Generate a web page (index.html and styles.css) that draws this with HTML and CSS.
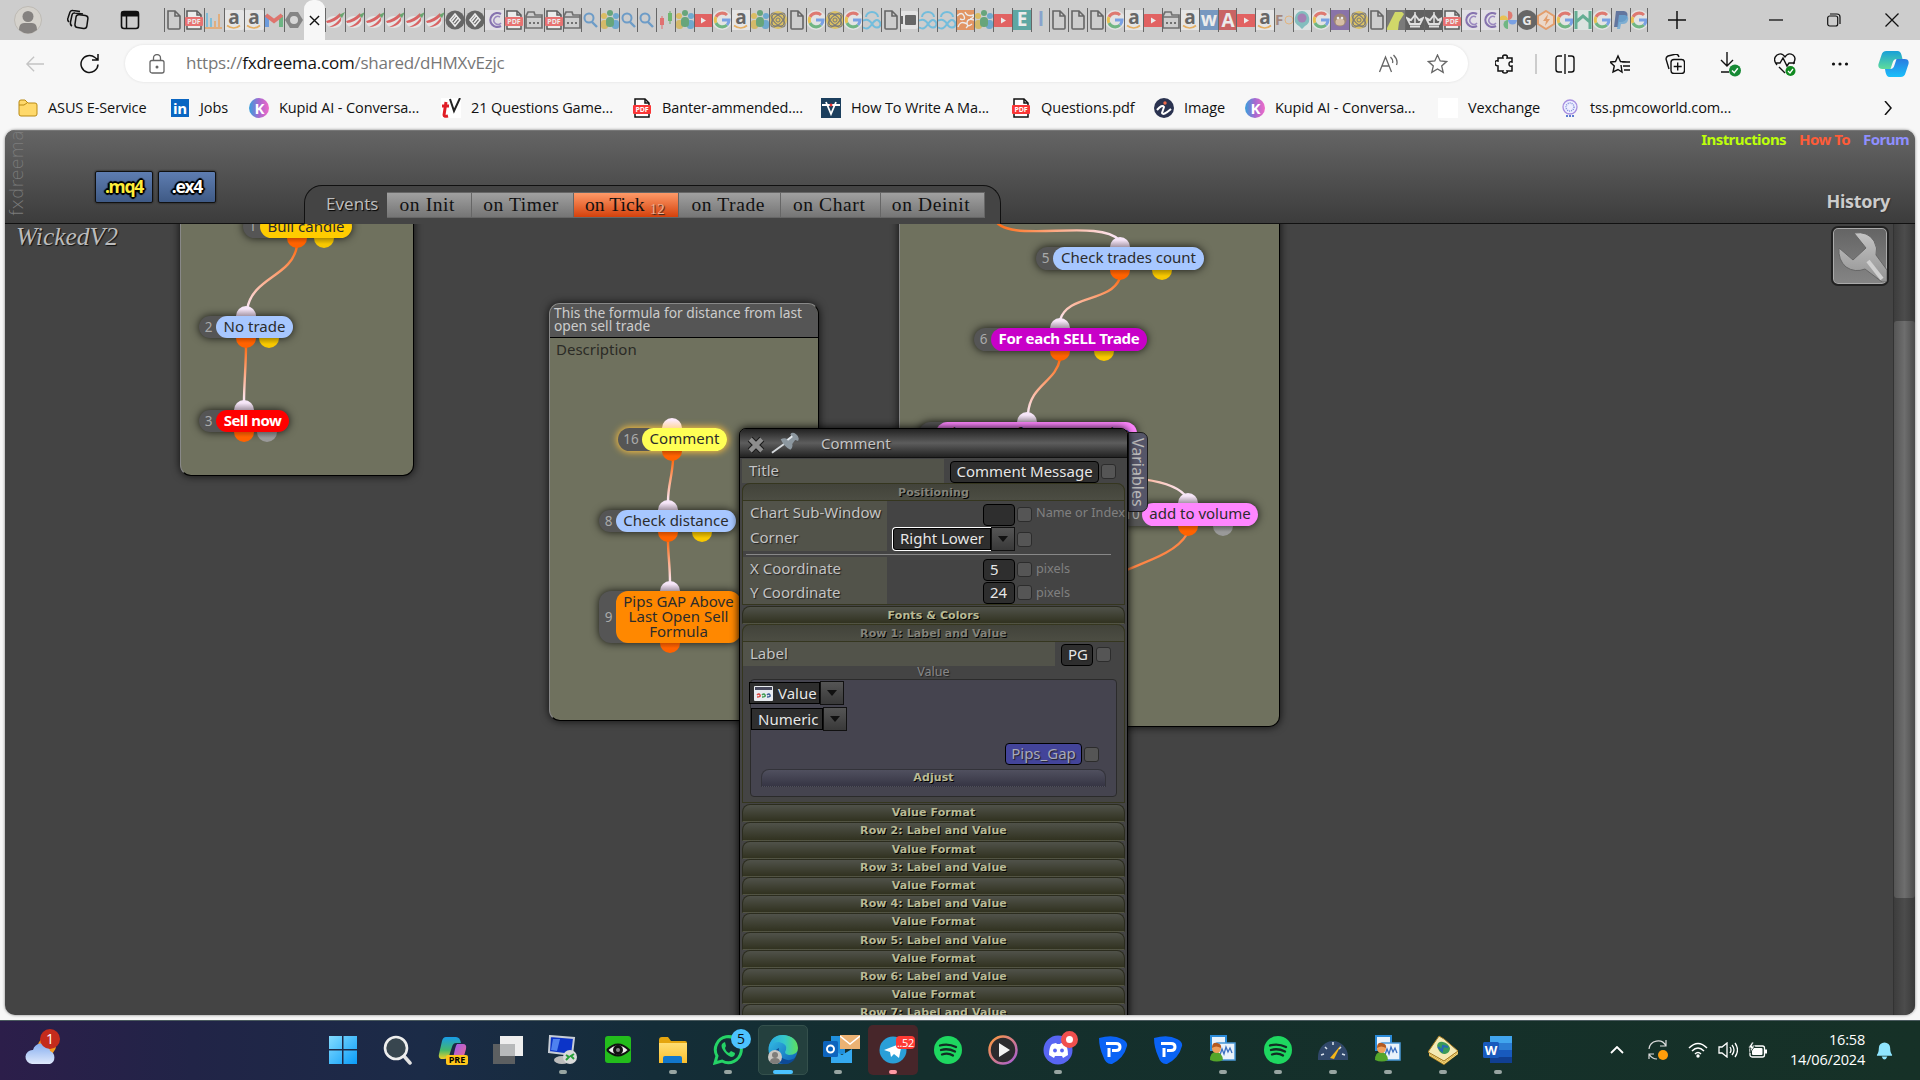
FILE: index.html
```html
<!DOCTYPE html>
<html lang="en">
<head>
    <meta charset="UTF-8">
    <title>fxdreema</title>
    <link rel="stylesheet" href="styles.css">
</head>
<body>
    <!-- Gradients -->
    <svg class="gradients" width="0" height="0">
        <defs>
            <linearGradient id="wire" x1="0" y1="0" x2="0" y2="1"><stop offset="0" stop-color="#ff6a10"/><stop offset="1" stop-color="#fbeafa"/></linearGradient>
            <linearGradient id="wireRight"><stop offset="0" stop-color="#ff6a10"/><stop offset="1" stop-color="#fbeafa"/></linearGradient>
            <linearGradient id="kupid"><stop offset="0" stop-color="#38a0dc"/><stop offset=".5" stop-color="#a569d0"/><stop offset="1" stop-color="#f06ac8"/></linearGradient>
            <linearGradient id="steel" x1="0" y1="0" x2="0" y2="1"><stop offset="0" stop-color="#c4c4c4"/><stop offset="1" stop-color="#929292"/></linearGradient>
            <linearGradient id="edge" x1="0" y1="0" x2="1" y2="1"><stop offset="0" stop-color="#38c6e8"/><stop offset="1" stop-color="#0c5bb5"/></linearGradient>
            <linearGradient id="edgeTop"><stop offset="0" stop-color="#2aa8e4"/><stop offset=".55" stop-color="#36c9c8"/><stop offset="1" stop-color="#5ee05a"/></linearGradient>
            <linearGradient id="cop1" x1="0" y1="0" x2="0" y2="1"><stop offset="0" stop-color="#189ce8"/><stop offset=".6" stop-color="#45b86c"/><stop offset="1" stop-color="#f2d127"/></linearGradient>
            <linearGradient id="cop2" x1="0" y1="0" x2="1" y2="1"><stop offset="0" stop-color="#9a5cf0"/><stop offset="1" stop-color="#f46a8c"/></linearGradient>
            <linearGradient id="cop3" x1="0" y1="0" x2="0" y2="1"><stop offset="0" stop-color="#18a0d8"/><stop offset="1" stop-color="#5fdc9a"/></linearGradient>
            <linearGradient id="cop4" x1="0" y1="0" x2="0" y2="1"><stop offset="0" stop-color="#2b7be0"/><stop offset="1" stop-color="#1ac0fa"/></linearGradient>
            <linearGradient id="media" x1="0" y1="0" x2="1" y2="1"><stop offset="0" stop-color="#ff9a3c"/><stop offset="1" stop-color="#a55cd8"/></linearGradient>
            <linearGradient id="win" x1="0" y1="0" x2="1" y2="1"><stop offset="0" stop-color="#84dcff"/><stop offset="1" stop-color="#0a9cf8"/></linearGradient>
            <linearGradient id="cloud" x1="0" y1="0" x2="0" y2="1"><stop offset="0" stop-color="#86aef0"/><stop offset="1" stop-color="#dfe9fb"/></linearGradient>
            <linearGradient id="fold" x1="0" y1="0" x2="0" y2="1"><stop offset="0" stop-color="#ffde74"/><stop offset="1" stop-color="#fbbf2c"/></linearGradient>
        </defs>
    </svg>

    <!-- Icon sprite -->
    <svg class="sprite">
        <symbol id="f-doc" viewBox="0 0 20 20"><path d="M4 1h7l5 5v12q0 1-1 1H5q-1 0-1-1zM11 1v5h5" fill="none" stroke="#222" stroke-width="1.6"/></symbol>
        <symbol id="f-pdf" viewBox="0 0 20 20"><path d="M3 1h10l4 4v14H3z" fill="#fff" stroke="#111" stroke-width="1.5"/><path d="M13 1v4h4" fill="none" stroke="#111" stroke-width="1.5"/><rect x="1" y="7" width="18" height="9" rx="1" fill="#fa3636"/><text x="10" y="14.2" class="t t6">PDF</text></symbol>
        <symbol id="f-bars" viewBox="0 0 20 20"><path d="M3 18V3M7 18V8" stroke="#4db3e0" stroke-width="2"/><path d="M11 18V11M15 18V4M1 18h17" stroke="#ef9a4a" stroke-width="2"/></symbol>
        <symbol id="f-amazon" viewBox="0 0 20 20"><rect width="20" height="20" rx="2" fill="#f6f6f6"/><text x="10" y="14" class="t t18 dark">a</text><path d="M3 15.500q7 5 13 0" fill="none" stroke="#f59a1c" stroke-width="1.700"/></symbol>
        <symbol id="f-gmail" viewBox="0 0 20 20"><path d="M3 17V5" stroke="#2f7de8" stroke-width="4"/><path d="M17 17V5" stroke="#2ea553" stroke-width="4"/><path d="M2 5l8 6 8-6" fill="none" stroke="#ea3a2f" stroke-width="4"/></symbol>
        <symbol id="f-hex" viewBox="0 0 20 20"><path d="M6 2h8l5 8-5 8H6l-5-8z" fill="#555"/><circle cx="10" cy="10" r="4" fill="#ddd"/></symbol>
        <symbol id="f-fx" viewBox="0 0 20 20"><ellipse cx="9" cy="12" rx="8" ry="6" fill="#f6f6f6"/><path d="M1 11Q9 9 15 3l1 3Q9 13 2 13z" fill="#e02020"/><path d="M4 17Q12 14 16 7v4q-4 6-12 6" fill="#e02020"/><path d="M14 5l6-3-3 6z" fill="#2a8a30"/></symbol>
        <symbol id="f-diamond" viewBox="0 0 20 20"><circle cx="10" cy="10" r="9.500" fill="#222"/><path d="M5 10l5-6 5 6-5 6zM7 11l4-5M9 13l4-5" fill="none" stroke="#fff" stroke-width="1.600"/></symbol>
        <symbol id="f-c" viewBox="0 0 20 20"><rect width="20" height="20" fill="#f1eef6"/><path d="M16 4A7 7 0 1 0 16 16" fill="none" stroke="#58389c" stroke-width="2.200"/><path d="M15 7a4 4 0 1 0 1 6" fill="none" stroke="#7b5cb8" stroke-width="1.500"/></symbol>
        <symbol id="f-cal" viewBox="0 0 20 20"><path d="M2 6l2-4h6l1 3h7v13H2zM2 7h16" fill="none" stroke="#333" stroke-width="1.700"/><path d="M5 13h2M9 13h2M13 13h2" stroke="#333" stroke-width="2"/></symbol>
        <symbol id="f-search" viewBox="0 0 20 20"><circle cx="8" cy="8" r="4.500" fill="none" stroke="#2f7cc4" stroke-width="2"/><path d="M11 12l5 5" stroke="#2f7cc4" stroke-width="2.400"/></symbol>
        <symbol id="f-people" viewBox="0 0 20 20"><circle cx="4" cy="6" r="3" fill="#e5b31d"/><rect x="1" y="10" width="7" height="9" rx="3" fill="#d7ad28"/><circle cx="16" cy="6" r="3" fill="#3292d0"/><rect x="12" y="10" width="7" height="9" rx="3" fill="#3292d0"/><circle cx="10" cy="3" r="3" fill="#258c45"/><rect x="6" y="7" width="8" height="10" rx="3.500" fill="#258c45"/></symbol>
        <symbol id="f-candle" viewBox="0 0 20 20"><path d="M6 6v13" stroke="#e33" stroke-width="1"/><rect x="4" y="8" width="4" height="7" fill="#e33"/><path d="M14 1v13" stroke="#292" stroke-width="1"/><rect x="12" y="3" width="4" height="8" fill="#3a3"/></symbol>
        <symbol id="f-yt" viewBox="0 0 20 20"><rect y="4" width="20" height="13" rx="2" fill="#ef1c1c"/><path d="M8 7.500v6l5-3z" fill="#fff"/></symbol>
        <symbol id="f-g" viewBox="0 0 20 20"><circle cx="10" cy="10" r="10" fill="#f3f3f3"/><g fill="none" stroke-width="3"><path d="M15 5A7 7 0 0 0 4 7" stroke="#ea4335"/><path d="M4 7a7 7 0 0 0 0 6" stroke="#fbbc05"/><path d="M4 13a7 7 0 0 0 11 2" stroke="#34a853"/><path d="M10 10h7q0 3-2 5" stroke="#4285f4"/></g></symbol>
        <symbol id="f-atom" viewBox="0 0 20 20"><circle cx="10" cy="10" r="9" fill="#e5ba20"/><g fill="none" stroke="#444" stroke-width="1"><ellipse cx="10" cy="10" rx="9" ry="4" transform="rotate(45 10 10)"/><ellipse cx="10" cy="10" rx="9" ry="4" transform="rotate(-45 10 10)"/><rect x="4" y="4" width="12" height="12" rx="3"/><circle cx="10" cy="10" r="2"/></g></symbol>
        <symbol id="f-cloud" viewBox="0 0 20 20"><g fill="none" stroke="#38b3e6" stroke-width="2"><path d="M4 7a6 5 0 0 1 12 0"/><path d="M3 18a4 4 0 0 1 0-8q4-1 7 4t7 3q3-3 0-6t-7 3-7 4"/></g></symbol>
        <symbol id="f-card" viewBox="0 0 20 20"><rect y="1" width="20" height="18" rx="4" fill="#f3f3f3"/><path d="M3 6v8" stroke="#222" stroke-width="2"/><rect x="6" y="5" width="11" height="10" rx="1" fill="#222"/></symbol>
        <symbol id="f-swirl" viewBox="0 0 20 20"><rect width="20" height="20" fill="#f0701e"/><path d="M1 6q5-5 7 0t-4 3M9 2q2 5 8 3M2 17q2-6 7-4t1 5M18 10q-7-2-7 3t5 1M14 9q4-1 4-5" fill="none" stroke="#fff" stroke-width="1.400"/></symbol>
        <symbol id="f-e" viewBox="0 0 20 20"><rect width="20" height="20" fill="#158e88"/><text x="10" y="16" class="t t18">E</text></symbol>
        <symbol id="f-l" viewBox="0 0 20 20"><text x="11" y="16" class="t t18 blue-letter">l</text></symbol>
        <symbol id="f-w" viewBox="0 0 20 20"><rect width="20" height="20" fill="#3f76b8"/><text x="10" y="16" class="t t18">w</text></symbol>
        <symbol id="f-a" viewBox="0 0 20 20"><rect width="20" height="20" fill="#c81f1f"/><text x="10" y="17" class="t t18">A</text></symbol>
        <symbol id="f-f" viewBox="0 0 20 20"><text x="5" y="15" class="t t14 brown">F</text><circle cx="15" cy="10" r="4" fill="none" stroke="#f1a54c"/></symbol>
        <symbol id="f-chat" viewBox="0 0 20 20"><rect width="20" height="20" fill="#e8f1f2"/><path d="M10 1a8 8 0 0 1 3 15l-3 3-3-3A8 8 0 0 1 10 1" fill="#52b3b5"/><circle cx="10" cy="8" r="4.500" fill="#8b4fa4"/></symbol>
        <symbol id="f-monkey" viewBox="0 0 20 20"><rect width="20" height="20" fill="#5d3891"/><circle cx="10" cy="10" r="6.500" fill="#80583c"/><ellipse cx="10" cy="12" rx="4.500" ry="3.500" fill="#ddb58c"/><circle cx="8" cy="8" r="1.300" fill="#fff"/><circle cx="12" cy="8" r="1.300" fill="#fff"/></symbol>
        <symbol id="f-green" viewBox="0 0 20 20"><rect width="20" height="20" fill="#444"/><path d="M0 20L9 2h7l2 2-5 8-1 8z" fill="#d3df28"/></symbol>
        <symbol id="f-crown" viewBox="0 0 20 20"><rect width="20" height="20" fill="#1b1b1b"/><path d="M2 8l3 6h10l3-6-4 2-4-5-4 5zM5 16.500h10" fill="none" stroke="#eee" stroke-width="1.800"/><path d="M10 2v12" stroke="#eee" stroke-width="1.500"/></symbol>
        <symbol id="f-photos" viewBox="0 0 20 20"><path d="M10 1a4 4 0 0 1 0 9z" fill="#ea4335"/><path d="M19 10a4 4 0 0 1-9 0z" fill="#4285f4"/><path d="M10 19a4 4 0 0 1 0-9z" fill="#34a853"/><path d="M1 10a4 4 0 0 1 9 0z" fill="#fbbc05"/></symbol>
        <symbol id="f-gd" viewBox="0 0 20 20"><circle cx="10" cy="10" r="10" fill="#222"/><text x="10" y="14.500" class="t t12">G</text></symbol>
        <symbol id="f-bolt" viewBox="0 0 20 20"><path d="M10 1l8 5v8l-8 5-8-5V6z" fill="#ffe0c8" stroke="#f27f2c" stroke-width="2"/><path d="M12 4L7 11h3l-1 5 5-7h-3z" fill="#f27f2c"/></symbol>
        <symbol id="f-home" viewBox="0 0 20 20"><rect width="20" height="20" fill="#e7f3ee"/><path d="M3 1v18M17 1v18M3 12l7-6 7 6" fill="none" stroke="#1f9b6e" stroke-width="3"/></symbol>
        <symbol id="f-paypal" viewBox="0 0 20 20"><path d="M5 1h8q5 1 3 7-2 4-6 4H8l-1 5H3z" fill="#1e3d80"/><path d="M8 5h6q4 1 3 5-1 4-5 4h-2l-1 5H6z" fill="#2b8fd8" opacity=".8"/></symbol>

        <symbol id="b-kupid" viewBox="0 0 20 20"><circle cx="10" cy="10" r="10" fill="url(#kupid)"/><text x="10.500" y="15.500" class="t t14">K</text></symbol>

        <symbol id="k-spotify" viewBox="0 0 30 30"><circle cx="15" cy="15" r="14" fill="#1ed760"/><path d="M7 10.500q8-2.500 16 1.500M8 15q7-2 14 1.500M9 19.500q6-2 11 1" fill="none" stroke="#122c24" stroke-width="2.300" stroke-linecap="round"/></symbol>
        <symbol id="k-p" viewBox="0 0 30 30"><path d="M1 3Q15-1 24 4q6 3 5 7-3 12-15 18Q8 30 5 21 1 12 1 3" fill="#0a63f5"/><path d="M11 22V13M8 8.500h10q4 0 4 3.500t-4 3.500h-4" fill="none" stroke="#fff" stroke-width="3"/></symbol>
        <symbol id="k-trader" viewBox="0 0 30 30"><rect x="3" y="1" width="15" height="14" fill="#e8f2fb" stroke="#2b8bd8" stroke-width="2"/><rect x="9" y="8" width="18" height="17" fill="#eaf2fa" stroke="#4a98d8" stroke-width="1.500"/><path d="M12 20l2-6 2 5 2-7 2 5 2-4 2 5" fill="none" stroke="#3b6fc0" stroke-width="1.300"/><path d="M2 25q0-8 6-8t7 8q-6 3-13 0" fill="#54a52a"/><circle cx="8.500" cy="13.500" r="4.500" fill="#f0a05c"/><path d="M4 13q0-6 5-5 5 1 4 5-5-3-9 0" fill="#b45a20"/></symbol>
    </svg>

    <!-- Tab strip -->
    <div class="tabstrip">
        <svg class="avatar" viewBox="0 0 28 28"><circle cx="14" cy="14" r="13.500" fill="#d5d2cc" stroke="#bdbab4"/><circle cx="14" cy="10.500" r="5.500" fill="#858280"/><path d="M5 24q0-7 5-7h8q5 0 5 7-9 7-18 0" fill="#858280"/></svg>
        <svg class="workspaces" viewBox="0 0 22 22"><g fill="none" stroke="#111" stroke-width="1.500"><rect x="8.500" y="6" width="12" height="13" rx="3" transform="rotate(8 14 12)"/><path d="M5 17q-2-1-1.500-4L5 6q.5-2.500 3-2l8 1"/><path d="M2 13q-2-2-1-4l2-6q1-2 3-1.500l7 1"/></g></svg>
        <svg class="vtabs" viewBox="0 0 20 20"><rect x="1.500" y="1.500" width="17" height="17" rx="2.500" fill="none" stroke="#111" stroke-width="1.600"/><path d="M1.500 2h17v4h-17z" fill="#111" stroke="#111"/><path d="M6.500 6v12" stroke="#111" stroke-width="1.500"/></svg>
        <div class="tabs" id="tabs"></div>
        <svg class="newtab" viewBox="0 0 18 18"><path d="M9 0v18M0 9h18" stroke="#111" stroke-width="1.500"/></svg>
        <div class="window-buttons">
            <svg viewBox="0 0 14 14"><path d="M0 7h14" stroke="#111" stroke-width="1.300"/></svg>
            <svg viewBox="0 0 14 14"><path d="M3 1h7q3 0 3 3v7" fill="none" stroke="#111" stroke-width="1.200"/><rect x=".7" y="3" width="10" height="10" rx="2" fill="none" stroke="#111" stroke-width="1.200"/></svg>
            <svg viewBox="0 0 14 14"><path d="M.5.5l13 13M13.500.5l-13 13" stroke="#111" stroke-width="1.300"/></svg>
        </div>
    </div>

    <!-- Toolbar -->
    <div class="toolbar">
        <svg class="back" viewBox="0 0 20 20"><path d="M20 10H1M9 2L1 10l8 8" fill="none" stroke="#c4c4c4" stroke-width="1.500"/></svg>
        <svg class="reload" viewBox="0 0 20 20"><path d="M18.500 10.500a8.500 8.500 0 1 1-3-7l2.500 2M18.500 0v6h-6" fill="none" stroke="#111" stroke-width="1.500"/></svg>
        <div class="address">
            <svg class="lock" viewBox="0 0 16 20"><rect x="1" y="6.500" width="14" height="12.500" rx="2" fill="none" stroke="#666" stroke-width="1.300"/><path d="M4.500 6V4a3.500 3.500 0 0 1 7 0v2" fill="none" stroke="#666" stroke-width="1.300"/><circle cx="8" cy="13" r="1.500" fill="#666"/></svg>
            <span class="url">https://<b>fxdreema.com</b>/shared/dHMXvEzjc</span>
            <svg class="read" viewBox="0 0 20 20"><path d="M1 18L7 3l6 15M3.500 12h7M12 3q3 3 2 6M15 1q5 5 3 10" fill="none" stroke="#666" stroke-width="1.300"/></svg>
            <svg class="star" viewBox="0 0 20 20"><path d="M10 1l2.700 6 6.300.6-4.800 4.300 1.500 6.500-5.700-3.500-5.700 3.500 1.500-6.500L1 7.600 7.300 7z" fill="none" stroke="#666" stroke-width="1.300"/></svg>
        </div>
        <div class="tools">
            <svg viewBox="0 0 20 20"><path d="M5 4h3q-1-3 2-3t2 3h5v4q-3-1-3 2t3 2v5h-5q1 2-2 2t-2-2H3v-5q-3 0-3-3t3-2V4z" fill="none" stroke="#111" stroke-width="1.500"/></svg>
            <i class="divider"></i>
            <svg viewBox="0 0 20 20"><path d="M7 2H3.500Q1 2 1 4.500v11Q1 18 3.500 18H7M13 2h3.500Q19 2 19 4.500v11q0 2.500-2.500 2.500H13M10 0v20" fill="none" stroke="#111" stroke-width="1.400"/></svg>
            <svg viewBox="0 0 20 20"><path d="M11 11l1 7-4-2.500L3 18l1.300-6L0 8l5.500-.5L8 2l2.500 5.500L17 8M13 12h7M12 8h8M14 16h6" fill="none" stroke="#111" stroke-width="1.400"/></svg>
            <svg viewBox="0 0 20 20"><rect x="6" y="5.500" width="13.500" height="14" rx="3" fill="none" stroke="#111" stroke-width="1.400"/><path d="M12.700 8.500v8M8.700 12.500h8M4 15L1 5q0-2 2-3l8-2q2 0 3 3" fill="none" stroke="#111" stroke-width="1.400"/></svg>
            <svg class="badged" viewBox="0 0 22 25"><path d="M8 0v14M2 8l6 6 6-6M2 20h8" fill="none" stroke="#111" stroke-width="1.400"/><circle cx="16" cy="18.500" r="6" fill="#168a35"/><path d="M13 18.500l2.300 2.300 3.500-4.500" fill="none" stroke="#fff" stroke-width="1.400"/></svg>
            <svg class="badged" viewBox="0 0 22 25"><path d="M3 13Q-2 7 3 3q5-3 8 2 3-5 8-2 4 3 0 9M1 11h5l3-5 4 8 2-3h6M5 15l6 6" fill="none" stroke="#111" stroke-width="1.400"/><circle cx="16.500" cy="19" r="5" fill="#108a20"/><path d="M14 19l2 2 3-4" fill="none" stroke="#fff" stroke-width="1.300"/></svg>
            <svg viewBox="0 0 20 20"><g fill="#111"><circle cx="3.500" cy="10" r="1.600"/><circle cx="10" cy="10" r="1.600"/><circle cx="16.500" cy="10" r="1.600"/></g></svg>
            <svg class="copilot" viewBox="0 0 30 28"><path d="M8 1h11q3 0 4 4l1 4h-6q-3 0-4 4l-2 6H4q-5 0-4-5l3-9q1-4 5-4" fill="url(#cop3)"/><path d="M22 27H11q-3 0-4-5l-.5-3H12q3 0 4-4l2-6h8q5 0 4 5l-3 9q-1 4-5 4" fill="url(#cop4)"/></svg>
        </div>
    </div>

    <!-- Bookmarks -->
    <div class="bookmarks">
        <div class="bookmark"><svg viewBox="0 0 20 20"><path d="M1 4q0-2 2-2h4l3 3h7q2 0 2 2v9q0 2-2 2H3q-2 0-2-2z" fill="#ffd96b" stroke="#b98a14"/><path d="M1 7h5l3-2" fill="none" stroke="#b98a14"/></svg>ASUS E-Service</div>
        <div class="bookmark"><svg viewBox="0 0 20 20"><rect x="1" y="1" width="18" height="18" fill="#0a66c2"/><text x="10" y="16" class="t t14">in</text></svg>Jobs</div>
        <div class="bookmark"><svg><use href="#b-kupid"/></svg>Kupid AI - Conversa...</div>
        <div class="bookmark"><svg viewBox="0 0 20 20"><rect width="20" height="20" fill="#fff"/><path d="M1 8h7M5 4L3 17q0 2 4 1" fill="none" stroke="#e01e26" stroke-width="3"/><path d="M9 1l4 12 6-13" fill="none" stroke="#222" stroke-width="2"/></svg>21 Questions Game...</div>
        <div class="bookmark"><svg><use href="#f-pdf"/></svg>Banter-ammended....</div>
        <div class="bookmark"><svg viewBox="0 0 20 20"><rect width="20" height="20" fill="#1c3f5e"/><path d="M5 4l5 12 5-12M1 7h18" fill="none" stroke="#fff" stroke-width="1.800"/><circle cx="10" cy="7" r="1.500" fill="#e33"/></svg>How To Write A Ma...</div>
        <div class="bookmark"><svg><use href="#f-pdf"/></svg>Questions.pdf</div>
        <div class="bookmark"><svg viewBox="0 0 20 20"><circle cx="10" cy="10" r="10" fill="#2b3350"/><circle cx="11" cy="5" r="1.700" fill="#ef6a4a"/><path d="M3 12q5-6 7-3l-2 6q1 3 9-4" fill="none" stroke="#fff" stroke-width="2"/></svg>Image</div>
        <div class="bookmark"><svg><use href="#b-kupid"/></svg>Kupid AI - Conversa...</div>
        <div class="bookmark"><svg viewBox="0 0 20 20"><rect width="20" height="20" fill="#fff"/></svg>Vexchange</div>
        <div class="bookmark"><svg viewBox="0 0 20 20"><circle cx="10" cy="9" r="7" fill="#eef" stroke="#a78fe0" stroke-width="1.300"/><circle cx="10" cy="9" r="4" fill="none" stroke="#7f8fd8" stroke-width="1.500" stroke-dasharray="1 1"/><path d="M6 18h8" stroke="#5c7ad0" stroke-width="2" stroke-dasharray="2 1"/></svg>tss.pmcoworld.com...</div>
        <svg class="more" viewBox="0 0 8 14"><path d="M1 0l6 7-6 7" fill="none" stroke="#111" stroke-width="1.500"/></svg>
    </div>

    <!-- Page -->
    <div class="page">
        <div class="header">
            <div class="logo">fxdreema</div>
            <div class="exports">
                <span class="export mq4">.mq4</span>
                <span class="export">.ex4</span>
            </div>
            <div class="events">
                <span class="events-label">Events</span>
                <span class="event">on Init</span>
                <span class="event">on Timer</span>
                <span class="event active">on Tick <sub>12</sub></span>
                <span class="event">on Trade</span>
                <span class="event">on Chart</span>
                <span class="event">on Deinit</span>
            </div>
            <div class="header-right">
                <div class="links"><a class="link-instructions">Instructions</a><a class="link-howto">How To</a><a class="link-forum">Forum</a></div>
                <div class="history">History</div>
            </div>
        </div>

        <div class="canvas">
            <div class="project">WickedV2</div>
            <div class="diagram">
                <div class="group" id="group1"></div>
                <div class="group" id="group2">
                    <div class="group-title">This the formula for distance from last open sell trade</div>
                    <div class="group-text">Description</div>
                </div>
                <div class="group" id="group3"></div>

                <svg class="wires" width="1920" height="1080" fill="none" stroke="url(#wire)" stroke-width="2.400">
                    <path d="M297 246C292 277 252 277 247 310"/>
                    <path d="M246 346C246 365 244 385 244 402"/>
                    <path d="M673 460C672 478 668 485 668 502"/>
                    <path d="M668 540C668 555 670 565 670 583"/>
                    <path d="M994 218C1004 246 1098 217 1119 240" stroke="url(#wireRight)"/>
                    <path d="M1120 278C1110 303 1068 294 1060 320"/>
                    <path d="M1060 359C1056 382 1030 385 1028 414"/>
                    <path d="M1080 478C1120 475 1175 478 1187 498" stroke="url(#wireRight)"/>
                    <path d="M1187 534C1175 555 1140 563 1110 577" stroke="#ff8646"/>
                </svg>

                <div class="node yellow" id="node1"><span class="num">1</span><span class="name">Bull candle</span><i class="port out"></i><i class="port alt"></i></div>
                <div class="node blue" id="node2"><i class="port in"></i><span class="num">2</span><span class="name">No trade</span><i class="port out"></i><i class="port alt"></i></div>
                <div class="node red" id="node3"><i class="port in"></i><span class="num">3</span><span class="name">Sell now</span><i class="port out"></i><i class="port alt off"></i></div>
                <div class="node lemon" id="node16"><i class="port in"></i><span class="num">16</span><span class="name">Comment</span><i class="port out"></i></div>
                <div class="node blue" id="node8"><i class="port in"></i><span class="num">8</span><span class="name">Check distance</span><i class="port out"></i><i class="port alt"></i></div>
                <div class="node orange" id="node9"><i class="port in"></i><span class="num">9</span><span class="name">Pips GAP Above<br>Last Open Sell<br>Formula</span><i class="port out"></i></div>
                <div class="node blue" id="node5"><i class="port in"></i><span class="num">5</span><span class="name">Check trades count</span><i class="port out"></i><i class="port alt"></i></div>
                <div class="node magenta" id="node6"><i class="port in"></i><span class="num">6</span><span class="name">For each SELL Trade</span><i class="port out"></i><i class="port alt"></i></div>
                <div class="node pink" id="node7"><i class="port in"></i><span class="num">7</span><span class="name">Pips away from open price</span></div>
                <div class="node pink" id="node10"><i class="port in"></i><span class="num">10</span><span class="name">add to volume</span><i class="port out"></i><i class="port alt off"></i></div>

                <!-- Block settings window -->
                <div class="variables">Variables</div>
                <div class="window">
                    <div class="window-title">
                        <svg class="close" viewBox="0 0 20 20"><path d="M3.500 3.500l13 13M16.500 3.500l-13 13" stroke="#1c1c1c" stroke-width="7.500"/><path d="M3.500 3.500l13 13M16.500 3.500l-13 13" stroke="#8e8e8e" stroke-width="5"/></svg>
                        <svg class="pin" viewBox="0 0 30 22"><path d="M1 21l14-10" stroke="#d6dade" stroke-width="2"/><path d="M10 7q4-2 7 0l4-3-1-2q2-3 6 0t2 7l-3-1-3 4q1 4-2 6-7-4-10-11" fill="#8c979f"/><path d="M17 8l5-4" stroke="#e4e9ee" stroke-width="2"/></svg>
                        <span>Comment</span>
                    </div>

                    <div class="row title-row">
                        <span class="label">Title</span>
                        <span class="input">Comment Message</span><i class="check"></i>
                    </div>

                    <div class="section">
                        <div class="section-head open">Positioning</div>
                        <div class="fields">
                            <div class="row short"><span class="label">Chart Sub-Window</span><span class="input small"></span><i class="check"></i><span class="hint">Name or Index</span></div>
                            <div class="row short"><span class="label">Corner</span><span class="select focus">Right Lower</span><i class="arrow"></i><i class="check"></i></div>
                            <div class="rule"></div>
                            <div class="row short coord"><span class="label">X Coordinate</span><span class="input small">5</span><i class="check"></i><span class="hint">pixels</span></div>
                            <div class="row short coord"><span class="label">Y Coordinate</span><span class="input small">24</span><i class="check"></i><span class="hint">pixels</span></div>
                        </div>
                    </div>

                    <div class="section-head fonts">Fonts &amp; Colors</div>

                    <div class="section">
                        <div class="section-head open">Row 1: Label and Value</div>
                        <div class="row label-row"><span class="label">Label</span><span class="input small">PG</span><i class="check"></i></div>
                        <div class="value-caption">Value</div>
                        <div class="value-box">
                            <div class="picker">
                                <span class="select"><svg viewBox="0 0 19 15"><rect width="19" height="15" rx="1" fill="#e9ecf0"/><rect x="1" y="1" width="17" height="3" fill="#47485c"/><path d="M3 9q2-2 3 0t-3 2" stroke="#d8453c" stroke-width="1.500" fill="none"/><path d="M8 9q2-2 3 0t-3 2" stroke="#3e9a50" stroke-width="1.500" fill="none"/><path d="M13 9q2-2 3 0t-3 2" stroke="#3a5c94" stroke-width="1.500" fill="none"/></svg>Value</span><i class="arrow"></i>
                            </div>
                            <div class="picker numeric"><span class="select">Numeric</span><i class="arrow"></i></div>
                            <div class="value-row"><span class="input variable">Pips_Gap</span><i class="check"></i></div>
                            <div class="section-head adjust">Adjust</div>
                        </div>
                    </div>

                    <div class="section-head">Value Format</div>
                    <div class="section-head">Row 2: Label and Value</div>
                    <div class="section-head">Value Format</div>
                    <div class="section-head">Row 3: Label and Value</div>
                    <div class="section-head">Value Format</div>
                    <div class="section-head">Row 4: Label and Value</div>
                    <div class="section-head">Value Format</div>
                    <div class="section-head">Row 5: Label and Value</div>
                    <div class="section-head">Value Format</div>
                    <div class="section-head">Row 6: Label and Value</div>
                    <div class="section-head">Value Format</div>
                    <div class="section-head">Row 7: Label and Value</div>
                </div>
            </div>

            <div class="wrench">
                <svg viewBox="0 0 54 54"><path d="M21 5q14-2 20 8 4 7 2 14l11 15v12h-5L32 41q-10 4-19-2Q5 32 6 20l14 12 13-12z" fill="url(#steel)" stroke="#666"/><path d="M35 33l14 18" stroke="#d0d0d0" stroke-width="4"/></svg>
            </div>
            <div class="scrollbar"><div class="thumb"></div></div>
        </div>
    </div>

    <!-- Taskbar -->
    <div class="taskbar">
        <div class="weather">
            <svg viewBox="0 0 32 32"><circle cx="22" cy="12" r="9" fill="#f59a1c"/><path d="M7 30a7 7 0 0 1 1-14 9 9 0 0 1 16-3l1 4a7 7 0 0 1 0 13z" fill="url(#cloud)"/></svg>
            <span class="badge red-badge">1</span>
        </div>
        <div class="apps">
            <div class="app"><svg viewBox="0 0 30 30"><path d="M1 1h13v13H1zM15.500 1H29v13H15.500zM1 15.500h13V29H1zM15.500 15.500H29V29H15.500z" fill="url(#win)"/></svg></div>
            <div class="app"><svg viewBox="0 0 30 30"><path d="M20 20l7 8" stroke="#e2e2e2" stroke-width="3.500" stroke-linecap="round"/><circle cx="13" cy="13" r="11" fill="#38464f" stroke="#eee" stroke-width="2.600"/></svg></div>
            <div class="app"><svg viewBox="0 0 30 30"><path d="M8 2h10q4 0 5 6h-5q-3 0-4 4l-3 9q-1 3-5 3H3q-3-1-2-5l3-13q1-4 4-4" fill="url(#cop1)"/><path d="M19 9h6q4 0 3 5l-2 7q-1 4-5 4h-5q-1-5 1-11 1-4 2-5" fill="url(#cop2)"/><rect x="8" y="20" width="22" height="10" rx="2" fill="#ffc61a"/><text x="19" y="28.200" class="t t9 black">PRE</text></svg></div>
            <div class="app"><svg viewBox="0 0 30 30"><rect x="0" y="9" width="22" height="20" fill="#5c5f61"/><rect x="7" y="1" width="23" height="20" fill="#eee"/><rect x="7" y="9" width="15" height="12" fill="#b7b9ba"/></svg></div>
            <div class="app run"><svg viewBox="0 0 30 30"><path d="M2 1l24 2-2 17-23-3z" fill="#0c34c8" stroke="#c8ced6" stroke-width="2"/><path d="M12 4L9 16l-6-1L5 4z" fill="#6ca4ff" opacity=".7"/><ellipse cx="14" cy="25" rx="8" ry="4" fill="#bdbdbd"/><circle cx="22" cy="22" r="7" fill="#dadada"/><path d="M18 20l3 2-3 3M26 19l-3 2 3 3" fill="none" stroke="#28a038" stroke-width="2"/></svg></div>
            <div class="app"><svg viewBox="0 0 30 30"><rect x="2" y="1" width="26" height="27" rx="3" fill="#23bd1c"/><path d="M4 15Q15 4 26 15 15 26 4 15" fill="#eee" stroke="#111" stroke-width="2"/><circle cx="15" cy="15" r="5" fill="#111"/><circle cx="15" cy="15" r="2" fill="#888"/></svg></div>
            <div class="app run"><svg viewBox="0 0 30 30"><path d="M1 5q0-3 3-3h6l3 4h14q2 0 2 2v5H1z" fill="#e5a50f"/><path d="M1 8h28v20H1z" fill="url(#fold)"/><path d="M5 28v-5q0-2 2-2h15q2 0 2 2v5z" fill="#1277cc"/></svg></div>
            <div class="app run"><svg viewBox="0 0 30 30"><path d="M2 28l2-7a13 13 0 1 1 5 5z" fill="none" stroke="#25d366" stroke-width="3"/><path d="M10 8q-3 2 0 7 3 5 8 7 4 0 4-4l-4-2-2 2q-3-1-4-5l1-2-1-4z" fill="#25d366"/></svg><span class="badge blue-badge">5</span></div>
            <div class="app current"><svg viewBox="0 0 30 30"><circle cx="15" cy="14.500" r="14.500" fill="url(#edge)"/><path d="M1 12Q3 0 15 0q14 1 15 13 0 7-9 7-6-1-3-5 2-6-7-8-6 0-10 5" fill="url(#edgeTop)"/><path d="M11 13q-2 8 5 11 7 3 12-2-4 8-13 7-8-1-9-9 0-5 5-7" fill="#0d4a96"/><circle cx="7" cy="22" r="7" fill="#c9c7c3"/><circle cx="7" cy="20" r="3" fill="#807d7a"/><path d="M2 27q0-4 5-4t5 4q-5 4-10 0" fill="#807d7a"/></svg></div>
            <div class="app run"><svg viewBox="0 0 30 30"><path d="M8 1h14v18H8z" fill="#1f8fdc"/><path d="M8 14l11 6 10-6v14H8z" fill="#35aaf0"/><rect x="0" y="6" width="15" height="16" rx="1.500" fill="#0d64bd"/><circle cx="7.500" cy="14" r="3.500" fill="none" stroke="#fff" stroke-width="2"/></svg><svg class="mail" viewBox="0 0 20 14"><path d="M0 0h20v14H0z" fill="#ebb273"/><path d="M0 1l10 8L20 1" fill="none" stroke="#fff" stroke-width="1.500"/></svg></div>
            <div class="app alert"><svg viewBox="0 0 30 30"><circle cx="15" cy="15" r="13.500" fill="#2a9fd8"/><path d="M6 15l18-7-3 15-5-4-3 3-1-5z" fill="#fff"/></svg><span class="count">..52</span></div>
            <div class="app"><svg><use href="#k-spotify"/></svg></div>
            <div class="app"><svg viewBox="0 0 30 30"><circle cx="15" cy="15" r="13.500" fill="#2b2b2e" stroke="url(#media)" stroke-width="2.500"/><path d="M11 8v14l11-7z" fill="#f2f2f2"/></svg></div>
            <div class="app run"><svg viewBox="0 0 30 30"><circle cx="15" cy="15" r="14.500" fill="#5865f2"/><path d="M6 20q0-8 3-11l4-1 1 1h3l1-1 4 1q3 3 3 11l-5 3-1-2h-7l-1 2z" fill="#fff"/><circle cx="12" cy="15.500" r="1.900" fill="#5865f2"/><circle cx="19" cy="15.500" r="1.900" fill="#5865f2"/></svg><span class="badge dot-badge"></span></div>
            <div class="app"><svg><use href="#k-p"/></svg></div>
            <div class="app"><svg><use href="#k-p"/></svg></div>
            <div class="app run"><svg><use href="#k-trader"/></svg></div>
            <div class="app run"><svg><use href="#k-spotify"/></svg></div>
            <div class="app run"><svg viewBox="0 0 30 30"><path d="M0 22a15 16 0 1 1 30 0v3H0z" fill="#31486a"/><path d="M3 20l3-1M7 12l2 2M15 7v3M23 12l-2 2M27 20l-3-1" stroke="#dbe4ee" stroke-width="1.500"/><path d="M12 23L23 10 16 24z" fill="#f4b61a"/></svg></div>
            <div class="app run"><svg><use href="#k-trader"/></svg></div>
            <div class="app run"><svg viewBox="0 0 30 30"><path d="M1 17v4l15 9 14-11v-4z" fill="#c8962a"/><path d="M1 18l15 9 14-10M1 19.500l15 9 14-10" fill="none" stroke="#f3dc8a"/><path d="M0 17L11 1l5 3 14 12-14 10z" fill="#f4e9b4" stroke="#a67a22"/><path d="M9 11q1-5 6-4t7 6q0 5-5 6t-8-8" fill="#3a9a58"/><path d="M10 12l4 4 1-5 5 1" fill="none" stroke="#2468b8" stroke-width="2"/></svg></div>
            <div class="app run"><svg viewBox="0 0 30 30"><path d="M7 1h22v8H7z" fill="#41a5ee"/><path d="M7 8h22v7H7z" fill="#2b7cd3"/><path d="M7 15h22v7H7z" fill="#185abd"/><path d="M7 22h22v6H7z" fill="#103f91"/><rect x="0" y="7" width="16" height="16" rx="1.500" fill="#185abd"/><text x="8" y="19.500" class="t t12">W</text></svg></div>
        </div>
        <div class="tray">
            <svg class="up" viewBox="0 0 14 8"><path d="M1 7l6-6 6 6" fill="none" stroke="#fff" stroke-width="1.800"/></svg>
            <svg class="sync" viewBox="0 0 20 20"><path d="M1 9a9 9 0 0 1 17-3M18 0v6h-6M1 19v-5h5M1 14q3 5 8 5" fill="none" stroke="#ddd" stroke-width="1.200"/><circle cx="15" cy="15" r="5" fill="#ff9d0a"/></svg>
            <svg class="wifi" viewBox="0 0 20 16"><g fill="none" stroke="#fff" stroke-width="1.500"><path d="M1 6q9-9 18 0M4 9q6-6 12 0M7 12q3-3 6 0"/></g><circle cx="10" cy="14" r="1.700" fill="#fff"/></svg>
            <svg class="volume" viewBox="0 0 20 16"><g fill="none" stroke="#fff" stroke-width="1.300"><path d="M1 5h3l5-4v14l-5-4H1zM12 5q2 3 0 6M14 3q4 5 0 10M17 1q5 7 0 14"/></g></svg>
            <svg class="battery" viewBox="0 0 20 16"><rect x="2" y="4" width="14.500" height="11" rx="2" fill="none" stroke="#fff" stroke-width="1.300"/><rect x="4" y="6" width="10.500" height="7" rx="1" fill="#fff"/><path d="M18 7.500v4" stroke="#fff" stroke-width="2"/><path d="M4 0L0 6h3l-1 5 5-7H4l2-4z" fill="#fff" stroke="#17302a" stroke-width=".8"/></svg>
            <div class="clock">16:58<br>14/06/2024</div>
            <svg class="bell" viewBox="0 0 18 20"><path d="M1 15q2-2 2-7a6 6 0 0 1 12 0q0 5 2 7v1H1zM6 17h6q-1 3-3 3t-3-3" fill="#8ee5ff"/></svg>
        </div>
    </div>

    <script>
        // Open tabs in order, "x" is the active one
        const openTabs = 'doc pdf bars amazon amazon gmail hex x fx fx fx fx fx fx diamond diamond c pdf cal ' +
            'pdf cal search people search search candle people yt g amazon people atom doc g atom g cloud doc card cloud cloud ' +
            'swirl people yt e l doc doc doc g amazon yt cal amazon w a yt amazon f chat g monkey atom doc green ' +
            'crown crown pdf c c photos gd bolt g home g paypal g';

        document.getElementById('tabs').innerHTML = openTabs.split(' ').map((name, i) => {
            if (name === 'x') {
                return '<div class="tab active"><svg viewBox="0 0 12 12"><path d="M1 1l10 10M11 1L1 11" stroke="#111" stroke-width="1.5"/></svg></div>';
            }
            const wide = i < 19 ? ' wide' : '';
            return '<div class="tab' + wide + '"><svg viewBox="0 0 20 20"><use href="#f-' + name + '"/></svg></div>';
        }).join('');
    </script>
</body>
</html>
```
FILE: styles.css
```css
* {
    box-sizing: border-box;
}

body {
    margin: 0;
    width: 1920px;
    height: 1080px;
    overflow: hidden;
    background: #f7f7f7;
    font-family: 'Open Sans', 'Noto Sans', sans-serif;
    color: #111;
}

svg {
    display: block;
    flex: none;
}

.gradients {
    position: absolute;
}

.sprite {
    display: none;
}

/* Lettering inside icons */
.t {
    font-family: 'Open Sans', sans-serif;
    font-weight: bold;
    text-anchor: middle;
    fill: #fff;
}

.t6 { font-size: 7px; }
.t9 { font-size: 9px; }
.t12 { font-size: 13px; }
.t14 { font-size: 15px; }
.t18 { font-size: 19px; }
.dark { fill: #222; }
.black { fill: #000; }
.brown { fill: #8a5a4a; }
.blue-letter { fill: #5b88cc; }

/* Tab strip */
.tabstrip {
    display: flex;
    align-items: center;
    height: 40px;
    background: #cdcdcd;
}

.avatar {
    width: 28px;
    height: 28px;
    margin-left: 14px;
}

.workspaces {
    width: 22px;
    height: 22px;
    margin-left: 25px;
}

.vtabs {
    width: 20px;
    height: 20px;
    margin-left: 31px;
}

.tabs {
    display: flex;
    align-items: center;
    width: 1486px;
    height: 40px;
    margin-left: 24px;
    flex: none;
}

.tab {
    width: 18.73px;
    height: 24px;
    overflow: hidden;
    flex: none;
    border-left: 1px solid #666;
    display: flex;
    align-items: center;
    justify-content: center;
}

.tab.wide {
    width: 19.95px;
}

.tab:last-child {
    border-right: 1px solid #666;
}

.tab svg {
    width: 20px;
    height: 20px;
    opacity: .6;
}

.tab.active {
    width: 21px;
    height: 40px;
    background: #f7f7f7;
    border: 0;
    border-radius: 9px 9px 0 0;
}

.tab.active svg {
    width: 11px;
    height: 11px;
    opacity: 1;
}

.newtab {
    width: 18px;
    height: 18px;
    margin-left: 18px;
}

.window-buttons {
    display: flex;
    gap: 44px;
    margin-left: 83px;
}

.window-buttons svg {
    width: 14px;
    height: 14px;
}

/* Toolbar */
.toolbar {
    display: flex;
    align-items: center;
    height: 47px;
    background: #f7f7f7;
}

.back {
    width: 20px;
    height: 18px;
    margin-left: 25px;
}

.reload {
    width: 21px;
    height: 20px;
    margin-left: 34px;
}

.address {
    display: flex;
    align-items: center;
    width: 1343px;
    height: 37px;
    margin-left: 25px;
    border-radius: 19px;
    background: #fff;
    box-shadow: 0 0 3px rgba(0, 0, 0, .1);
}

.lock {
    width: 16px;
    height: 20px;
    margin-left: 24px;
}

.url {
    margin-left: 21px;
    font-size: 17px;
    line-height: 24px;
    letter-spacing: -.22px;
    color: #777;
    flex: 1;
    padding-bottom: 2px;
}

.url b {
    font-weight: normal;
    color: #111;
}

.read,
.star {
    width: 21px;
    height: 20px;
}

.star {
    margin: 0 20px 0 28px;
}

.tools {
    display: flex;
    align-items: center;
    margin-left: 27px;
    gap: 35px;
}

.tools svg {
    width: 20px;
    height: 20px;
}

.tools .badged {
    width: 22px;
    height: 25px;
    margin: 2px -1px 0;
}

.tools svg:first-child {
    margin-right: -15px;
}

.divider {
    width: 2px;
    height: 20px;
    margin-right: -17px;
    background: #ccc;
}

.tools .copilot {
    width: 31px;
    height: 28px;
    margin-left: -7px;
}

/* Bookmarks */
.bookmarks {
    display: grid;
    grid-template-columns: 152px 79px 192px 191px 189px 190px 143px 91px 193px 122px 328px auto;
    align-items: center;
    height: 41px;
    padding-left: 18px;
}

.bookmark {
    display: flex;
    align-items: center;
    gap: 10px;
    font-size: 14.5px;
    line-height: 20px;
    letter-spacing: -.12px;
    white-space: nowrap;
}

.bookmark svg {
    width: 20px;
    height: 20px;
}

.more {
    width: 8px;
    height: 14px;
    margin-left: -4px;
}

/* Page */
.page {
    width: 1910px;
    height: 885px;
    margin: 2px 5px 0;
    border-radius: 10px;
    overflow: hidden;
    background: #444;
    font-family: 'Noto Sans', sans-serif;
    box-shadow: 0 0 3px rgba(0, 0, 0, .5);
}

.header {
    position: relative;
    z-index: 2;
    display: flex;
    height: 94px;
    border-top: 1px solid #777;
    border-bottom: 1px solid #111;
    background: linear-gradient(#656565, #3c3c3c);
}

.logo {
    width: 26px;
    height: 86px;
    padding-top: 1px;
    writing-mode: vertical-rl;
    transform: rotate(180deg);
    font: 18px/24px 'DejaVu Sans', sans-serif;
    font-weight: 200;
    text-align: right;
    color: #7c7c7c;
}

.exports {
    display: flex;
    gap: 5px;
    width: 236px;
    padding: 40px 0 0 64px;
}

.export {
    width: 58px;
    height: 32px;
    border: 1px solid #111;
    border-radius: 2px;
    background: linear-gradient(#5e7db1, #3f5a85);
    box-shadow: 0 0 2px #111;
    font-size: 17.500px;
    font-weight: bold;
    line-height: 28px;
    letter-spacing: -1.200px;
    text-align: center;
    color: #fff;
    text-shadow: 1px 1px 1px #000, -1px -1px 1px #000, 1px -1px 1px #000, -1px 1px 1px #000, 0 2px 1px #000, 2px 0 1px #000, -2px 0 1px #000, 0 -2px 1px #000;
}

.mq4 {
    color: #ffee3a;
}

.events {
    display: flex;
    width: 697px;
    height: 39px;
    margin: 54px 0 -1px 37px;
    padding: 6px 0 0 21px;
    flex: none;
    border: 1px solid #111;
    border-bottom: 0;
    border-radius: 18px 18px 0 0;
    background: #444;
}

.events-label {
    width: 61px;
    font-size: 17px;
    line-height: 23px;
    letter-spacing: 0;
    color: #bbb;
    text-shadow: 1px 1px 1px #000;
}

.event {
    height: 26px;
    flex: 84 0 0;
    padding-right: 3px;
    border: 1px solid #666;
    border-left-width: 0;
    background: linear-gradient(#a0a0a0, #757575);
    font: 19.500px/23px 'Liberation Serif', serif;
    letter-spacing: .6px;
    text-align: center;
    white-space: nowrap;
    color: #111;
}

.event:nth-child(3) { flex-grow: 103; }
.event:nth-child(4) { flex-grow: 105; }
.event:nth-child(5) { flex-grow: 102; }
.event:nth-child(6) { flex-grow: 100; }
.event:nth-child(7) { flex-grow: 104; margin-right: 15px; }

.event.active {
    background: linear-gradient(#ff9a68, #d4410c);
    letter-spacing: .1px;
}

.event sub {
    font-size: 15px;
    line-height: 10px;
    vertical-align: -3px;
    color: #f0b090;
    text-shadow: 1px 1px 1px #222;
}

.header-right {
    flex: 1;
    text-align: right;
}

.links {
    display: flex;
    justify-content: flex-end;
    gap: 13px;
    padding-right: 6px;
    font-size: 15px;
    font-weight: bold;
    line-height: 16px;
    letter-spacing: -.55px;
}

.link-instructions { color: #bdff0a; }
.link-howto { color: #ff5c38; }
.link-forum { color: #8f8fff; }

.history {
    padding: 42px 25px 0 0;
    font-size: 18px;
    font-weight: bold;
    line-height: 24px;
    letter-spacing: -.3px;
    color: #ccc;
    text-shadow: 1px 1px 1px #333;
}

/* Canvas */
.canvas {
    position: relative;
    height: 791px;
}

.project {
    padding-left: 11px;
    font: italic 25.500px/25px 'Liberation Serif', serif;
    color: #bbb;
    text-shadow: 1px 1px 1px #111;
}

/* Free canvas, shares its origin with the browser window */
.diagram {
    position: absolute;
    left: -5px;
    top: -224px;
    width: 1920px;
    height: 1080px;
}

.group {
    position: absolute;
    border: 1px solid #000;
    border-left-color: #888;
    border-radius: 11px;
    background: #6f715e;
    box-shadow: 0 0 8px rgba(0, 0, 0, .8);
    overflow: hidden;
}

#group1 { left: 180px; top: 100px; width: 234px; height: 376px; }
#group2 { left: 549px; top: 303px; width: 270px; height: 418px; border-top-color: #888; }
#group3 { left: 899px; top: 100px; width: 381px; height: 627px; }

.group-title {
    height: 34px;
    padding: 2px 4px;
    border-bottom: 1px solid #000;
    background: #555;
    font-size: 13.800px;
    line-height: 13px;
    color: #ccc;
}

.group-text {
    padding: 2px 6px;
    font-size: 15px;
    line-height: 18px;
    color: #2b2b26;
}

.wires {
    position: absolute;
    left: 0;
    top: 0;
}

.node {
    position: absolute;
    display: flex;
    height: 23px;
    border-radius: 12px;
    background: #555;
    box-shadow: 0 0 8px rgba(0, 0, 0, .8);
    font-size: 15px;
    line-height: 21px;
    color: #2c2c2c;
}

.num {
    width: 17px;
    padding-left: 2px;
    flex: none;
    align-self: center;
    text-align: center;
    font-size: 13.500px;
    color: #aaa;
}

.name {
    flex: 1;
    border-radius: 12px;
    background: #a7c7ff;
    text-align: center;
    white-space: nowrap;
}

.yellow .name { background: #fc0; }
.lemon .name { background: #ffff55; }
.orange .name { background: #ff8800; }
.pink .name { background: #ff86ff; }

.red .name,
.magenta .name {
    background: #f00;
    font-weight: bold;
    letter-spacing: -.5px;
    line-height: 20px;
    color: #fff;
}

.magenta .name {
    background: #c800c8;
    letter-spacing: -.3px;
}

.port {
    position: absolute;
    width: 20px;
    height: 10px;
    margin-left: -10px;
}

.port.in {
    left: var(--in);
    top: -10px;
    border-radius: 10px 10px 0 0;
    background: linear-gradient(#f6e6f8 30%, #a597a6);
}

.port.out,
.port.alt {
    left: var(--in);
    top: 100%;
    border-radius: 0 0 10px 10px;
    background: linear-gradient(#c94a00, #ff6200 50%);
}

.port.alt {
    left: var(--alt);
    background: linear-gradient(#b08d00, #f8c800 60%);
}

.port.off {
    background: linear-gradient(#666, #999 60%);
}

#node1 { left: 243px; top: 215px; width: 109px; --in: 54px; --alt: 81px; line-height: 23px; }
#node2 { left: 199px; top: 316px; width: 94px; height: 22px; --in: 47px; --alt: 70px; }
#node3 { left: 199px; top: 410px; width: 90px; height: 22px; --in: 45px; --alt: 68px; }
#node16 { left: 618px; top: 428px; width: 109px; --in: 54px; box-shadow: 0 0 7px 1px #ffc23c; }
#node8 { left: 599px; top: 510px; width: 137px; height: 22px; --in: 69px; --alt: 103px; line-height: 20px; }
#node9 { left: 599px; top: 591px; width: 142px; height: 52px; --in: 71px; }
#node5 { left: 1036px; top: 247px; width: 168px; --in: 84px; --alt: 126px; }
#node6 { left: 974px; top: 328px; width: 173px; --in: 86px; --alt: 130px; }
#node7 { left: 919px; top: 422px; width: 218px; --in: 108px; }
#node10 { left: 1120px; top: 503px; width: 138px; --in: 68px; --alt: 103px; }

#node16 .num { width: 24px; }
#node16 .port.in { background: linear-gradient(#fdeafa 20%, #ffd8a0); }
#node10 .num { width: 22px; }

#node9 .name {
    padding-top: 3px;
    line-height: 15px;
}

/* Block settings window */
.variables {
    position: absolute;
    left: 1128px;
    top: 432px;
    width: 20px;
    height: 80px;
    border: 1px solid #1c1c1c;
    border-radius: 0 7px 7px 0;
    background: #555568;
    writing-mode: vertical-rl;
    font-size: 16px;
    line-height: 19px;
    text-align: center;
    color: #bbb;
}

.window {
    position: absolute;
    left: 739px;
    top: 428px;
    width: 389px;
    height: 620px;
    padding: 0 2px;
    border: 1px solid #000;
    border-radius: 7px 7px 0 0;
    background: #444;
    box-shadow: 0 0 9px #000;
    color: #c4c4c4;
    font-size: 15px;
    text-shadow: 1px 1px 1px #222;
}

.window-title {
    display: flex;
    align-items: center;
    height: 29px;
    margin: 0 -2px;
    border-bottom: 1px solid #111;
    border-radius: 6px 6px 0 0;
    background: linear-gradient(#222, #5d5d5d 50%, #222);
}

.close {
    width: 20px;
    height: 18px;
    margin: 3px 0 0 6px;
}

.pin {
    width: 29px;
    height: 22px;
    margin: 0 21px 0 5px;
}

.row {
    display: flex;
    align-items: center;
    height: 24px;
}

.label {
    align-self: stretch;
    width: 202px;
    padding-left: 7px;
    flex: none;
    line-height: 23px;
    white-space: nowrap;
    background: #52534a;
}

.title-row {
    margin-top: 1px;
}

.input {
    width: 149px;
    height: 22px;
    margin: 2px 2px 0 6px;
    border: 1px solid #000;
    border-radius: 4px;
    background: #2e2e2e;
    line-height: 19px;
    text-align: center;
    white-space: nowrap;
    color: #e6e6e6;
    flex: none;
}

.check {
    width: 15px;
    height: 15px;
    margin-top: 1px;
    border: 1px solid #2c2c2c;
    border-radius: 3px;
    background: #555;
    flex: none;
}

.input.small {
    width: 32px;
    padding-left: 6px;
    text-align: left;
}

.section {
    border: 1px solid #35361f;
    border-top: 0;
    border-radius: 8px 8px 0 0;
    margin-bottom: 1px;
}

.section-head {
    height: 18.200px;
    border: 1px solid #2b2c1e;
    border-bottom: 1px dotted #55563e;
    border-radius: 8px 8px 0 0;
    background: linear-gradient(#50524a, #313220);
    font: bold 11px/16px 'DejaVu Sans', sans-serif;
    letter-spacing: .1px;
    text-align: center;
    color: #b9ba95;
    text-shadow: 1px 1px 0 #000;
}

.section-head.fonts {
    line-height: 17px;
}

.section-head.open {
    margin: 0 -1px;
    height: 18px;
    line-height: 18px;
    background: linear-gradient(#42433a, #4c4d43);
    border-color: #35361f;
    border-bottom: 1px solid #35361f;
    color: #83837a;
}

.fields {
    height: 103px;
}

.row.short {
    height: 25px;
}

.short .label {
    width: 144px;
}

.short .input {
    margin-left: 96px;
}

.short.coord {
    height: 23.500px;
}

.hint {
    margin-left: 4px;
    font-size: 12.700px;
    line-height: 18px;
    white-space: nowrap;
    color: #808080;
    text-shadow: none;
    align-self: flex-start;
    padding-top: 2px;
}

.rule {
    height: 1px;
    margin: 3px 13px 2px 3px;
    background: #888;
}

.select {
    height: 22px;
    padding: 0 4px;
    border: 1px solid #000;
    background: #2e2e2e;
    line-height: 19px;
    white-space: nowrap;
    color: #e6e6e6;
}

.select.focus {
    width: 99px;
    height: 24px;
    margin: 1px 0 0 5px;
    border: 1px solid #fff;
    border-right: 0;
    border-radius: 4px 0 0 4px;
    line-height: 21px;
    text-align: center;
    box-shadow: inset 0 0 0 1px #000;
}

.arrow {
    display: flex;
    justify-content: center;
    align-items: center;
    width: 24px;
    height: 24px;
    border: 1px solid #111;
    background: linear-gradient(#555, #393939);
    flex: none;
}

.arrow::after {
    content: '';
    border: 5px solid transparent;
    border-top: 6px solid #111;
    border-bottom: 0;
}

.arrow + .check {
    margin-left: 2px;
}

.label-row .label {
    width: 312px;
}

.label-row .check {
    margin-left: 1px;
}

.value-caption {
    height: 13px;
    font-size: 12.500px;
    line-height: 11px;
    text-align: center;
    color: #888;
}

.value-box {
    height: 118px;
    margin: 0 7px 5px;
    border: 1px solid #2b2b2b;
    border-radius: 4px;
    background: #45444f;
}

.picker {
    display: flex;
    align-items: center;
    height: 26px;
    margin-left: -2px;
}

.picker .select {
    display: flex;
    align-items: center;
    width: 71px;
    gap: 5px;
}

.picker .select svg {
    width: 19px;
    height: 15px;
}

.picker.numeric {
    margin-left: 0;
}

.numeric .select {
    width: 72px;
    padding-left: 6px;
}

.value-row {
    display: flex;
    align-items: center;
    justify-content: flex-end;
    height: 22px;
    margin: 11px 17px 4px 0;
}

.input.variable {
    width: 77px;
    margin: 0 2px 0 0;
    background: #43449a;
    color: #a9a9b8;
}

.section-head.adjust {
    margin: 0 10px;
    background: linear-gradient(#50505f, #363544);
    border-color: #33333a;
}

/* Tools */
.wrench {
    position: absolute;
    right: 26px;
    top: 2px;
    width: 58px;
    height: 60px;
    border: 2px solid #222;
    border-radius: 7px;
    background: linear-gradient(#646464, #858585);
    box-shadow: inset 0 0 0 1px #aaa;
    overflow: hidden;
}

.scrollbar {
    position: absolute;
    right: 0;
    top: 0;
    width: 22px;
    height: 791px;
    border-left: 1px solid #333;
    background: linear-gradient(to right, #3d3d3d, #4c4c4c 50%, #3a3a3a);
}

.thumb {
    height: 577px;
    margin-top: 97px;
    background: linear-gradient(to right, #555, #6e6e6e 50%, #4c4c4c);
    border-radius: 3px;
}

/* Taskbar */
.taskbar {
    display: flex;
    align-items: center;
    height: 60px;
    margin-top: 5px;
    padding-bottom: 1px;
    border-top: 1px solid #4a5a5e;
    background: linear-gradient(to right, #2c1e4a, #212447 10%, #1b2b47 22%, #142d38 34%, #142f2d 48%, #163127);
    color: #fff;
}

.weather {
    position: relative;
    width: 32px;
    height: 32px;
    margin-left: 25px;
}

.badge {
    position: absolute;
    left: 15px;
    top: -5px;
    width: 20px;
    height: 20px;
    border-radius: 50%;
    font-size: 14px;
    line-height: 20px;
    text-align: center;
}

.red-badge {
    background: #c42b1c;
}

.blue-badge {
    left: 28px;
    top: 4px;
    background: #4cc2ff;
    color: #111;
}

.dot-badge {
    left: 28px;
    top: 6px;
    width: 17px;
    height: 17px;
    border: 5px solid #f0504e;
    background: #fff;
}

.apps {
    display: flex;
    gap: 5px;
    margin-left: 261px;
}

.app {
    position: relative;
    display: flex;
    align-items: center;
    justify-content: center;
    width: 50px;
    height: 50px;
    border-radius: 5px;
}

.app svg {
    width: 30px;
    height: 30px;
}

.app.run::after,
.app.current::after,
.app.alert::after {
    content: '';
    position: absolute;
    left: 21px;
    bottom: 1px;
    width: 8px;
    height: 4px;
    border-radius: 2px;
    background: #98a5a2;
}

.app.current {
    background: #24403e;
    border: 1px solid #34504c;
}

.app.current::after {
    left: 14px;
    bottom: 0;
    width: 20px;
    background: #4cc2ff;
}

.app.alert {
    background: #47262a;
}

.app.alert::after {
    background: #ff99a4;
}

.app .mail {
    position: absolute;
    left: 27px;
    top: 10px;
    width: 20px;
    height: 14px;
}

.count {
    position: absolute;
    left: 28px;
    top: 11px;
    width: 19px;
    height: 13px;
    border-radius: 4px;
    background: #ff3a34;
    font-size: 11px;
    line-height: 13px;
    text-align: center;
    letter-spacing: -.3px;
}

.tray {
    display: flex;
    align-items: center;
    flex: 1;
    padding-left: 87px;
}

.up { width: 14px; height: 8px; }
.sync { width: 20px; height: 20px; margin-left: 24px; }
.wifi { width: 20px; height: 16px; margin-left: 20px; }
.volume { width: 20px; height: 16px; margin-left: 10px; }
.battery { width: 20px; height: 16px; margin-left: 10px; }

.clock {
    width: 97px;
    font-size: 14.500px;
    line-height: 20px;
    letter-spacing: -.2px;
    text-align: right;
}

.bell {
    width: 17px;
    height: 20px;
    margin-left: 11px;
}
```
